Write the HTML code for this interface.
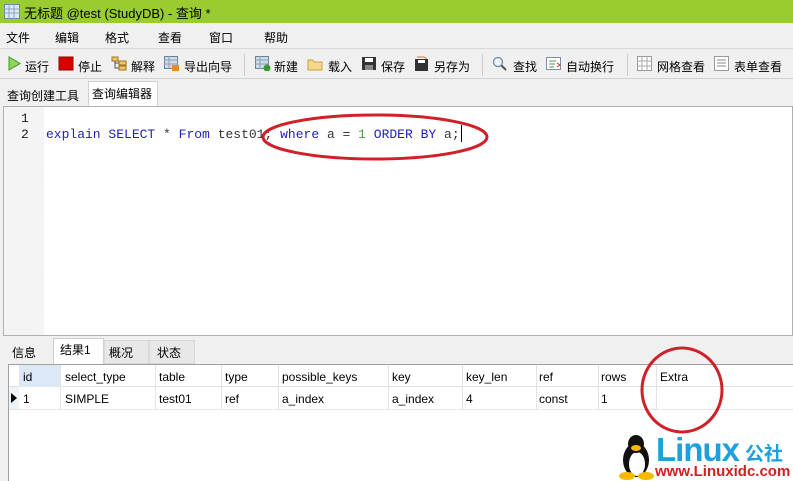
<!DOCTYPE html>
<html><head><meta charset="utf-8"><style>
*{margin:0;padding:0;box-sizing:border-box}
body{width:793px;height:481px;overflow:hidden;background:#f0f0f0;font-family:"Liberation Sans","Noto Sans CJK SC",sans-serif;font-size:12px;color:#000;position:relative}
.abs{position:absolute}
.title{left:0;top:0;width:793px;height:23px;background:#99cc2e;}
.title span{position:absolute;left:24px;top:3px;font-size:13px}
.menu{top:23px;left:0;width:793px;height:26px;border-bottom:1px solid #d8d8d8}
.menu span{position:absolute;top:6px;font-size:12px}
.tb{top:50px;left:0;width:793px;height:29px;border-bottom:1px solid #d0d0d0}
.tb span{position:absolute;top:8px;font-size:12px}
.ic{position:absolute;top:56px;width:16px;height:15px}
.sep{position:absolute;top:54px;width:1px;height:22px;background:#ccc}
.tabs span{position:absolute;font-size:12px}
.code{font-family:"Liberation Mono",monospace;font-size:13px;position:absolute;white-space:pre}
.grid{left:8px;top:364px;width:785px;height:117px;background:#fff;border-left:1px solid #a0a0a0;border-top:1px solid #a0a0a0}
.cell{position:absolute;font-size:12px}
.vl{position:absolute;width:1px;background:#e4e4e4}
</style></head><body>
<div class="abs title">
<svg class="abs" style="left:4px;top:4px" width="16" height="15"><rect x="0.5" y="0.5" width="15" height="14" fill="#dfe8f2" stroke="#6b8aa8"/><path d="M0 5H16M0 9H16M5 0V15M10 0V15" stroke="#8aa5c0"/></svg>
<span>无标题 @test (StudyDB) - 查询 *</span></div>
<div class="abs menu">
<span style="left:6px">文件</span><span style="left:55px">编辑</span><span style="left:105px">格式</span><span style="left:158px">查看</span><span style="left:209px">窗口</span><span style="left:264px">帮助</span></div>
<div class="abs tb">
<span style="left:25px">运行</span><span style="left:78px">停止</span><span style="left:131px">解释</span><span style="left:184px">导出向导</span>
<span style="left:274px">新建</span><span style="left:328px">载入</span><span style="left:381px">保存</span><span style="left:434px">另存为</span>
<span style="left:513px">查找</span><span style="left:566px">自动换行</span><span style="left:657px">网格查看</span><span style="left:734px">表单查看</span></div>
<svg class="ic" style="left:7px"><path d="M2 1L13 7.5L2 14Z" fill="#8fd45a" stroke="#3a9a20"/></svg>
<svg class="ic" style="left:58px"><rect x="1" y="1" width="14" height="13" fill="#d80000" stroke="#900"/></svg>
<svg class="ic" style="left:111px"><rect x="1" y="1" width="6" height="4" fill="#f0c860" stroke="#a07020"/><rect x="8" y="5" width="7" height="4" fill="#f0c860" stroke="#a07020"/><rect x="8" y="10" width="7" height="4" fill="#f0c860" stroke="#a07020"/><path d="M4 5V12H8M4 7H8" stroke="#555" fill="none"/></svg>
<svg class="ic" style="left:164px"><rect x="0.5" y="0.5" width="13" height="12" fill="#cfdbe6" stroke="#6a8299"/><path d="M0 4H14M0 8H14M5 0V13" stroke="#8aa0b5"/><rect x="8" y="9" width="7" height="6" fill="#e88a2a"/></svg>
<div class="sep" style="left:244px"></div>
<svg class="ic" style="left:255px"><rect x="0.5" y="0.5" width="13" height="12" fill="#cfdbe6" stroke="#6a8299"/><path d="M0 4H14M0 8H14M5 0V13" stroke="#8aa0b5"/><circle cx="12" cy="12" r="3.5" fill="#3a9a30"/></svg>
<svg class="ic" style="left:307px"><path d="M1 4H6L7 6H15V14H1Z" fill="#f2d98c" stroke="#c7a24a"/></svg>
<svg class="ic" style="left:361px"><rect x="1" y="1" width="14" height="13" fill="#333"/><rect x="4" y="2" width="8" height="4" fill="#fff"/><rect x="4" y="9" width="8" height="5" fill="#888"/></svg>
<svg class="ic" style="left:414px"><rect x="1" y="3" width="13" height="12" fill="#333"/><rect x="4" y="4" width="7" height="3" fill="#fff"/><path d="M3 1H10L13 3" stroke="#d08030" fill="none"/></svg>
<div class="sep" style="left:482px"></div>
<svg class="ic" style="left:492px"><circle cx="6" cy="6" r="4.5" fill="#eef4fa" stroke="#6a8aa8" stroke-width="1.3"/><path d="M9.5 9.5L14 14" stroke="#555" stroke-width="2"/></svg>
<svg class="ic" style="left:546px"><rect x="0.5" y="1.5" width="14" height="12" fill="#fff" stroke="#7a8fa5"/><path d="M3 5H10M3 8H9M3 11H8" stroke="#5a9a50"/><path d="M11 7L14 9L11 11" stroke="#d03030" fill="none"/></svg>
<div class="sep" style="left:627px"></div>
<svg class="ic" style="left:637px"><rect x="0.5" y="0.5" width="14" height="14" fill="#fff" stroke="#999"/><path d="M0 5H15M0 10H15M5 0V15M10 0V15" stroke="#aaa"/></svg>
<svg class="ic" style="left:714px"><rect x="0.5" y="0.5" width="14" height="14" fill="#fff" stroke="#999"/><path d="M3 4H12M3 7H12M3 10H12" stroke="#888"/></svg>
<div class="abs" style="left:88px;top:81px;width:70px;height:25px;background:#fff;border:1px solid #d0d0d0;border-bottom:none"></div>
<div class="tabs"><span style="left:7px;top:87px">查询创建工具</span><span style="left:92px;top:85px">查询编辑器</span></div>
<!-- editor -->
<div class="abs" style="left:3px;top:106px;width:790px;height:230px;background:#fff;border:1px solid #b0b0b0"></div>
<div class="abs" style="left:4px;top:107px;width:30px;height:228px;background:#f4f4f4"></div>
<div class="abs" style="left:34px;top:107px;width:10px;height:228px;background:repeating-linear-gradient(45deg,#fafafa 0 1px,#eeeeee 1px 2px)"></div>
<div class="code" style="left:21px;top:111px;color:#222">1</div>
<div class="code" style="left:21px;top:127px;color:#222">2</div>
<div class="code" style="left:46px;top:127px"><span style="color:#2020c0">explain SELECT</span> <span style="color:#333">*</span> <span style="color:#2020c0">From</span> <span style="color:#333">test01;</span> <span style="color:#2020c0">where</span> <span style="color:#333">a =</span> <span style="color:#4aa040">1</span> <span style="color:#2020c0">ORDER BY</span> <span style="color:#333">a;</span></div>
<div class="abs" style="left:461px;top:125px;width:1px;height:17px;background:#000"></div>
<svg class="abs" style="left:260px;top:110px" width="235" height="54"><ellipse cx="115" cy="27" rx="112" ry="22" fill="none" stroke="#d0202a" stroke-width="3"/></svg>
<!-- bottom tabs -->
<div class="abs" style="left:53px;top:338px;width:51px;height:27px;background:#fff;border:1px solid #d0d0d0;border-bottom:none"></div>
<div class="abs" style="left:104px;top:340px;width:45px;height:24px;background:#e8e8e8;border:1px solid #d8d8d8"></div>
<div class="abs" style="left:149px;top:340px;width:46px;height:24px;background:#e8e8e8;border:1px solid #d8d8d8"></div>
<div class="tabs"><span style="left:12px;top:344px">信息</span><span style="left:60px;top:341px">结果1</span><span style="left:109px;top:344px">概况</span><span style="left:157px;top:344px">状态</span></div>
<div class="abs grid"></div>
<div class="abs" style="left:9px;top:365px;width:784px;height:22px;background:#fff;border-bottom:1px solid #e0e0e0"></div>
<div class="abs" style="left:19px;top:365px;width:41px;height:22px;background:#dce8f5"></div>
<div class="abs" style="left:9px;top:387px;width:10px;height:22px;background:#eef3f8"></div>
<div class="abs" style="left:9px;top:409px;width:784px;height:1px;background:#e4e4e4"></div>
<div class="vl" style="left:60px;top:365px;height:44px"></div>
<div class="vl" style="left:155px;top:365px;height:44px"></div>
<div class="vl" style="left:221px;top:365px;height:44px"></div>
<div class="vl" style="left:278px;top:365px;height:44px"></div>
<div class="vl" style="left:388px;top:365px;height:44px"></div>
<div class="vl" style="left:462px;top:365px;height:44px"></div>
<div class="vl" style="left:536px;top:365px;height:44px"></div>
<div class="vl" style="left:598px;top:365px;height:44px"></div>
<div class="vl" style="left:656px;top:365px;height:44px"></div>
<div class="cell" style="left:23px;top:370px">id</div>
<div class="cell" style="left:65px;top:370px">select_type</div>
<div class="cell" style="left:159px;top:370px">table</div>
<div class="cell" style="left:225px;top:370px">type</div>
<div class="cell" style="left:282px;top:370px">possible_keys</div>
<div class="cell" style="left:392px;top:370px">key</div>
<div class="cell" style="left:466px;top:370px">key_len</div>
<div class="cell" style="left:539px;top:370px">ref</div>
<div class="cell" style="left:601px;top:370px">rows</div>
<div class="cell" style="left:660px;top:370px">Extra</div>
<svg class="abs" style="left:11px;top:393px" width="6" height="10"><path d="M0 0L6 5L0 10Z" fill="#000"/></svg>
<div class="cell" style="left:23px;top:392px">1</div>
<div class="cell" style="left:65px;top:392px">SIMPLE</div>
<div class="cell" style="left:159px;top:392px">test01</div>
<div class="cell" style="left:225px;top:392px">ref</div>
<div class="cell" style="left:282px;top:392px">a_index</div>
<div class="cell" style="left:392px;top:392px">a_index</div>
<div class="cell" style="left:466px;top:392px">4</div>
<div class="cell" style="left:539px;top:392px">const</div>
<div class="cell" style="left:601px;top:392px">1</div>
<svg class="abs" style="left:638px;top:345px" width="92" height="92"><ellipse cx="44" cy="45" rx="40" ry="42" fill="none" stroke="#d0202a" stroke-width="3"/></svg>
<!-- logo -->
<svg class="abs" style="left:618px;top:432px" width="40" height="48"><ellipse cx="18" cy="28" rx="13" ry="17" fill="#111"/><ellipse cx="19" cy="32" rx="8" ry="12" fill="#fff"/><ellipse cx="18" cy="12" rx="8" ry="9" fill="#111"/><ellipse cx="18" cy="16" rx="5" ry="3" fill="#f6b800"/><ellipse cx="9" cy="44" rx="8" ry="4" fill="#f6b800"/><ellipse cx="28" cy="44" rx="8" ry="4" fill="#f6b800"/></svg>
<div class="abs" style="left:656px;top:431px;font:bold 33px 'Liberation Sans',sans-serif;color:#1ea0dc;letter-spacing:-1px">Linux</div>
<div class="abs" style="left:745px;top:439px;font-size:19px;color:#1ea0dc;font-weight:bold">公社</div>
<div class="abs" style="left:655px;top:463px;font:bold 15px 'Liberation Sans',sans-serif;color:#d02020">www.Linuxidc.com</div>
</body></html>
